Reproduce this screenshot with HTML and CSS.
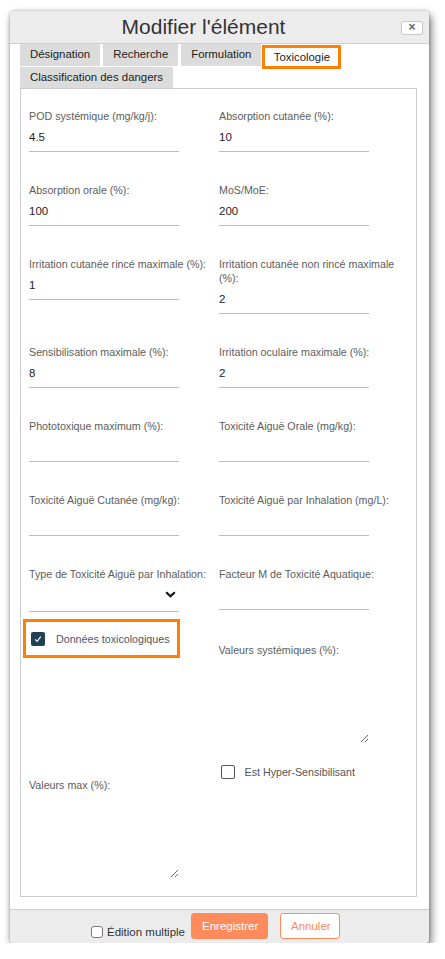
FILE: index.html
```html
<!DOCTYPE html>
<html lang="fr">
<head>
<meta charset="utf-8">
<title>Modifier l'élément</title>
<link rel="stylesheet" href="styles.css">
</head>
<body>
<div class="dialog">
  <div class="header">
    <div class="title">Modifier l'élément</div>
    <button class="close" type="button">×</button>
  </div>
  <div class="body">
    <div class="tabs">
      <div class="tab">Désignation</div>
      <div class="tab">Recherche</div>
      <div class="tab">Formulation</div>
      <div class="tab active">Toxicologie</div>
      <div class="tab second">Classification des dangers</div>
    </div>
    <div class="panel">
      <div class="grid">
        <div class="field"><div class="label">POD systémique (mg/kg/j):</div><div class="input">4.5</div></div>
        <div class="field"><div class="label">Absorption cutanée (%):</div><div class="input">10</div></div>
        <div class="field"><div class="label">Absorption orale (%):</div><div class="input">100</div></div>
        <div class="field"><div class="label">MoS/MoE:</div><div class="input">200</div></div>
        <div class="field"><div class="label">Irritation cutanée rincé maximale (%):</div><div class="input">1</div></div>
        <div class="field"><div class="label">Irritation cutanée non rincé maximale (%):</div><div class="input">2</div></div>
        <div class="field"><div class="label">Sensibilisation maximale (%):</div><div class="input">8</div></div>
        <div class="field"><div class="label">Irritation oculaire maximale (%):</div><div class="input">2</div></div>
        <div class="field"><div class="label">Phototoxique maximum (%):</div><div class="input"></div></div>
        <div class="field"><div class="label">Toxicité Aiguë Orale (mg/kg):</div><div class="input"></div></div>
        <div class="field"><div class="label">Toxicité Aiguë Cutanée (mg/kg):</div><div class="input"></div></div>
        <div class="field"><div class="label">Toxicité Aiguë par Inhalation (mg/L):</div><div class="input"></div></div>
        <div class="field"><div class="label">Type de Toxicité Aiguë par Inhalation:</div>
          <div class="input select"><svg class="chevron" width="11" height="7" viewBox="0 0 11 7"><polyline points="1.2,1.2 5.5,5.3 9.8,1.2" fill="none" stroke="#111" stroke-width="2.2"/></svg></div>
        </div>
        <div class="field"><div class="label">Facteur M de Toxicité Aquatique:</div><div class="input"></div></div>
      </div>
      <div class="bottom">
        <div class="col">
          <div class="checkgroup">
            <span class="cb checked"><svg width="10" height="10" viewBox="0 0 10 10"><polyline points="2.2,5.4 4.1,7.4 7.8,2.6" fill="none" stroke="#fff" stroke-width="1.1"/></svg></span>
            <span class="cbtext">Données toxicologiques</span>
          </div>
          <div class="label gap-max">Valeurs max (%):</div>
          <textarea class="area"></textarea>
        </div>
        <div class="col">
          <div class="label gap-sys">Valeurs systémiques (%):</div>
          <textarea class="area"></textarea>
          <div class="hyper">
            <span class="cb empty"></span>
            <span class="hypertext">Est Hyper-Sensibilisant</span>
          </div>
        </div>
      </div>
    </div>
  </div>
  <div class="footer">
    <label class="multi"><span class="cb small"></span>Édition multiple</label>
    <button class="btn primary" type="button">Enregistrer</button>
    <button class="btn secondary" type="button">Annuler</button>
  </div>
</div>
</body>
</html>
```
FILE: styles.css
```css
* { box-sizing: border-box; }
html, body { margin: 0; padding: 0; background: #ffffff; }
body { font-family: "Liberation Sans", Arial, sans-serif; color: #222; }

.dialog {
  margin: 11px 0 0 10px;
  width: 419px;
  height: 932px;
  background: #ffffff;
  border-radius: 4px;
  box-shadow: 2px 4px 9px rgba(0,0,0,0.55), 0 0 3px rgba(0,0,0,0.25);
  overflow: hidden;
  display: flex;
  flex-direction: column;
}

.header {
  height: 33px;
  background: #ececec;
  border-bottom: 1px solid #cfcfcf;
  display: flex;
  align-items: center;
  padding-right: 6px;
}
.title {
  flex: 1;
  text-align: center;
  font-size: 21px;
  color: #333;
  line-height: 32px;
}
.close {
  margin-left: 4px;
  width: 22px;
  height: 14px;
  padding: 0;
  border: 1px solid #c8c8c8;
  border-radius: 2px;
  background: #fff;
  color: #666;
  font-family: "Liberation Sans", Arial, sans-serif;
  font-weight: bold;
  font-size: 12px;
  line-height: 11px;
  margin-top: 1px;
}

.body { padding: 0 12px 12px 10px; }

.tabs {
  display: flex;
  flex-wrap: wrap;
  column-gap: 3px;
  row-gap: 1px;
  align-items: flex-start;
}
.tab {
  height: 22px;
  padding: 0 10px;
  background: #dcdcdc;
  font-size: 11.4px;
  line-height: 21px;
  color: #222;
}
.tab.second { height: 21px; line-height: 20px; }
.tab.active {
  background: #fff;
  border: 3px solid #ff7f00;
  width: 79px;
  height: 24px;
  margin-top: 1px;
  margin-bottom: -3px;
  margin-left: -2px;
  padding: 0;
  text-align: center;
  line-height: 19px;
}

.panel {
  height: 809px;
  border: 1px solid #cccccc;
  padding: 20px 8px 0 8px;
}

.grid {
  display: grid;
  grid-template-columns: 190px 190px;
  row-gap: 31px;
}
.label {
  font-size: 10.7px;
  line-height: 14px;
  color: #5c5c5c;
}
.input {
  width: 150px;
  height: 29px;
  border-bottom: 1px solid #bdbdbd;
  font-size: 11.5px;
  line-height: 28px;
  color: #222;
}
.input.select {
  height: 31px;
  display: flex;
  justify-content: flex-end;
  align-items: center;
  padding-right: 3px;
  padding-bottom: 4px;
}

.bottom { display: flex; }
.col { width: 190px; display: flex; flex-direction: column; align-items: flex-start; }

.checkgroup {
  margin-top: 7px;
  margin-left: -6px;
  width: 157px;
  height: 39px;
  border: 3px solid #ff7f00;
  display: flex;
  align-items: center;
  padding-left: 5px;
}
.cb {
  display: inline-flex;
  align-items: center;
  justify-content: center;
  flex: none;
}
.cb.checked {
  width: 14px;
  height: 14px;
  background: #1f4353;
  border-radius: 2px;
}
.cbtext {
  margin-left: 11px;
  font-size: 10.7px;
  color: #4e5666;
}
.gap-max { margin-top: 120px; }
.gap-sys { margin-top: 31px; }

.area {
  width: 150px;
  height: 86px;
  border: none;
  background: transparent;
  resize: both;
  outline: none;
  margin: 0;
  padding: 0;
}

.hyper {
  margin-top: 22px;
  display: flex;
  align-items: center;
  margin-left: 2px;
}
.cb.empty {
  width: 14px;
  height: 14px;
  border: 1px solid #555;
  border-radius: 2px;
  background: #fff;
}
.hypertext {
  margin-left: 10px;
  font-size: 10.7px;
  color: #555;
}

.footer {
  flex: 1;
  background: #ececec;
  border-top: 1px solid #cfcfcf;
  display: flex;
  justify-content: center;
  align-items: flex-start;
  padding: 3px 8px 0 0;
}
.multi {
  margin-top: 13px;
  display: flex;
  align-items: center;
  font-size: 11.5px;
  color: #333;
  line-height: 12px;
}
.cb.small {
  width: 12px;
  height: 12px;
  border: 1px solid #7a7a7a;
  border-radius: 3px;
  background: #fff;
  margin-right: 4px;
}
.btn {
  height: 26px;
  font-family: "Liberation Sans", Arial, sans-serif;
  font-size: 11.5px;
  border-radius: 3px;
  padding: 0 10px;
  line-height: 22px;
}
.btn.primary {
  margin-left: 6px;
  width: 77px;
  background: #ff8a5c;
  border: 1px solid #ff8a5c;
  color: #fff;
}
.btn.secondary {
  margin-left: 12px;
  width: 60px;
  background: #fff;
  border: 1px solid #ff8a5c;
  color: #ff8a5c;
}
```
